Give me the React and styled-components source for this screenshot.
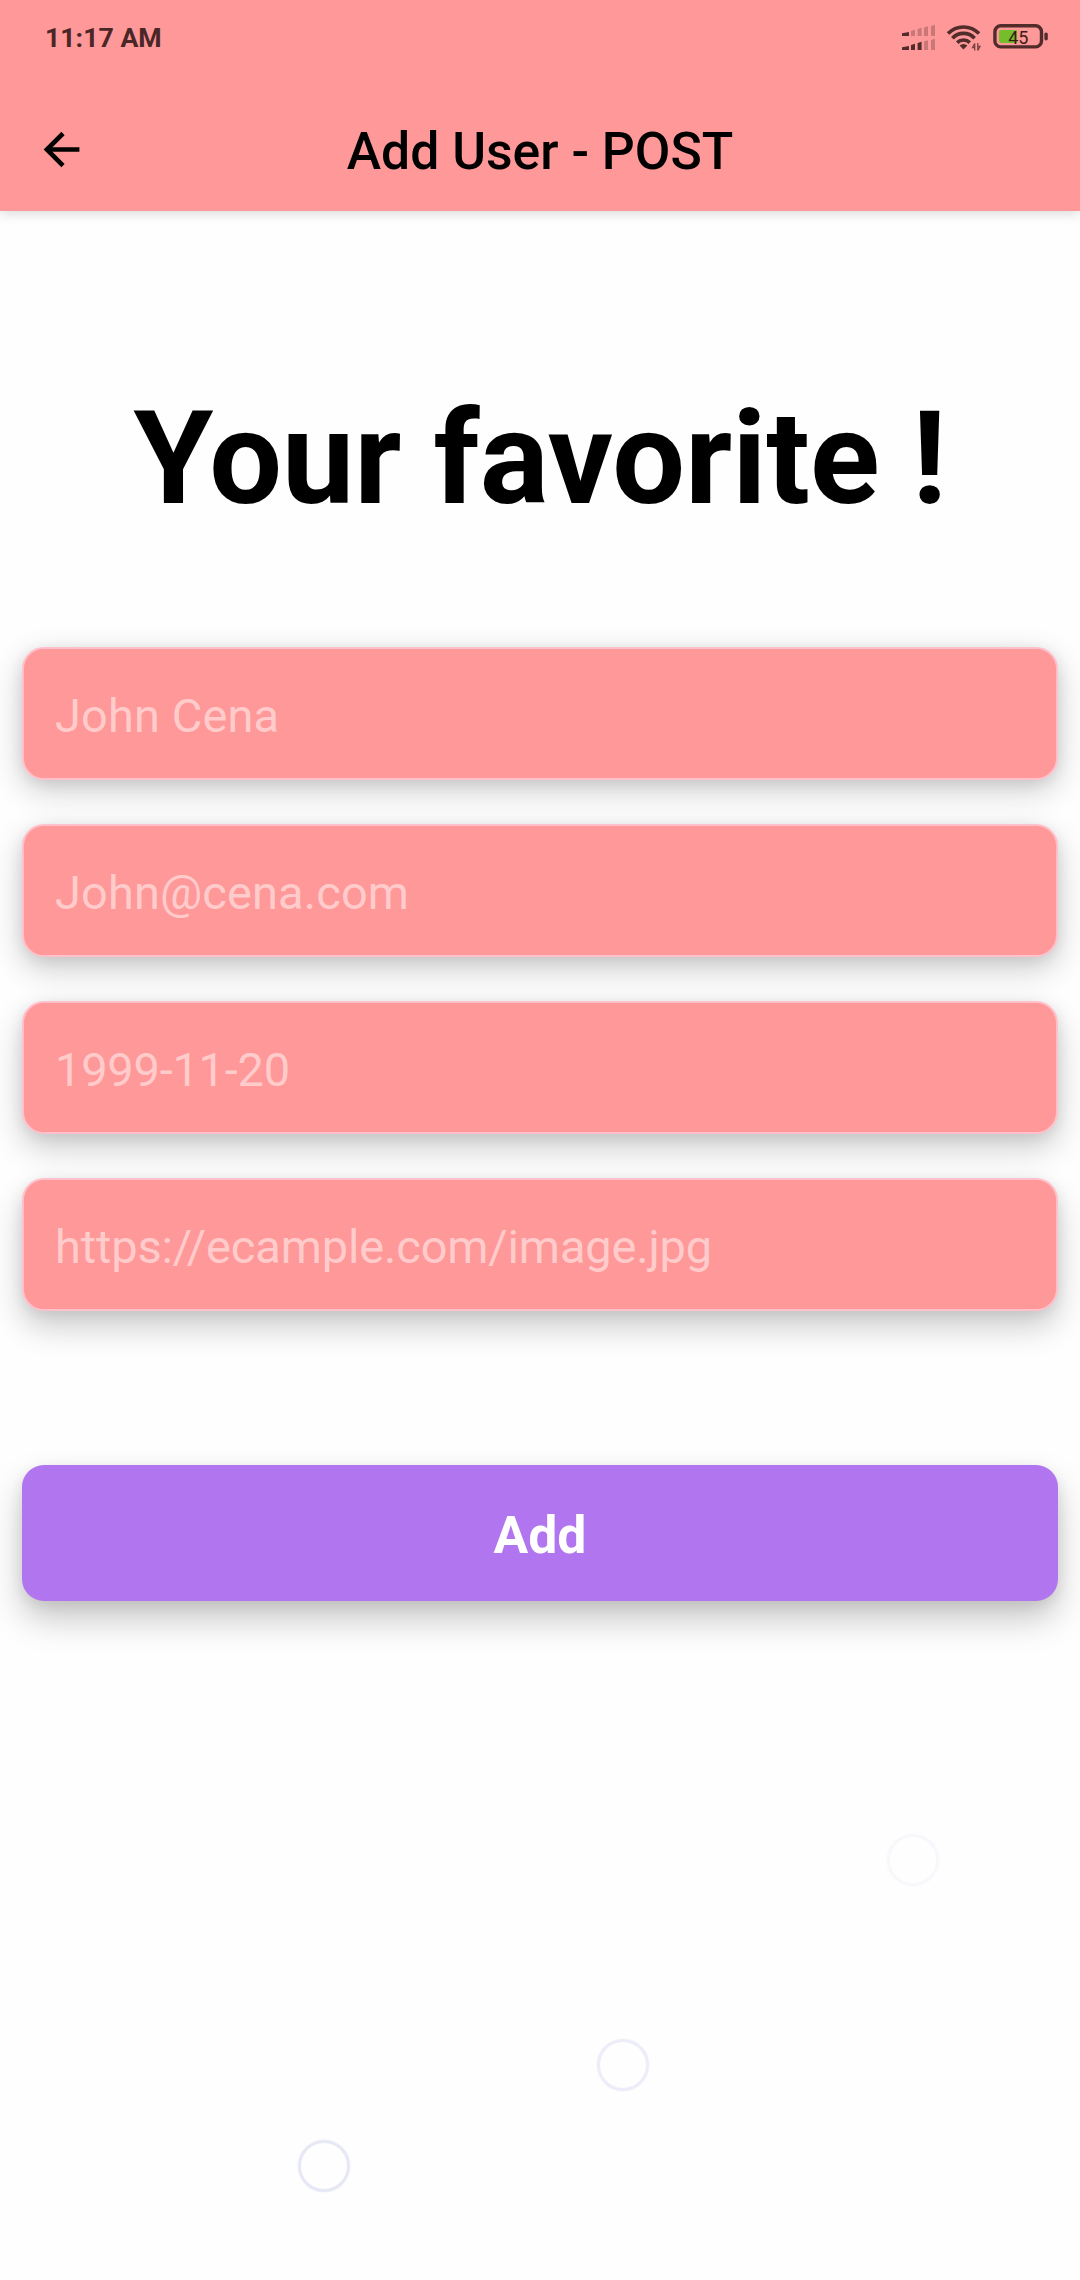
import React from "react";
import styled, { createGlobalStyle } from "styled-components";

const GlobalStyle = createGlobalStyle`
  body { margin: 0; background: #fefefe; }
  * { box-sizing: border-box; }
`;

const Screen = styled.div`
  position: relative;
  width: 1080px;
  height: 2280px;
  overflow: hidden;
  display: flex;
  flex-direction: column;
  background: #fefefe;
  font-family: Roboto, "Noto Sans", sans-serif;
  color: #000;
`;

const Top = styled.div`
  height: 211px;
  flex: none;
  background: #ff9898;
  box-shadow: 0 2px 12px rgba(0, 0, 0, 0.16);
`;

const StatusBar = styled.div`
  height: 75px;
  padding: 0 30px 0 45px;
  display: flex;
  align-items: center;
  justify-content: space-between;
`;

const Clock = styled.span`
  font-size: 26.7px;
  line-height: 32px;
  font-weight: 700;
  color: #4a2626;
`;

const StatusIcons = styled.svg`
  width: 150px;
  height: 75px;
  display: block;
`;

const BatteryText = styled.text`
  font-family: Roboto, sans-serif;
  font-size: 18px;
  fill: #3a1c14;
`;

const AppBar = styled.header`
  height: 136px;
  padding: 0 32px;
  display: grid;
  grid-template-columns: 60px 1fr 60px;
  align-items: center;
`;

const BackIcon = styled.svg`
  width: 60px;
  height: 60px;
  display: block;
`;

const Title = styled.h1`
  margin: 0;
  padding-top: 17px;
  text-align: center;
  font-size: 51.7px;
  line-height: 62px;
  font-weight: 500;
`;

const Form = styled.main`
  padding: 0 22px;
  display: flex;
  flex-direction: column;
`;

const Heading = styled.h2`
  margin: 173px 0 0;
  height: 150px;
  line-height: 150px;
  text-align: center;
  white-space: nowrap;
  font-size: 129px;
  font-weight: 700;
`;

const Fields = styled.div`
  margin-top: 113px;
  display: flex;
  flex-direction: column;
  gap: 44px;
`;

const Field = styled.div`
  height: 133px;
  padding: 4px 31px 0;
  display: flex;
  align-items: center;
  border: 2px solid #ffc0cb;
  border-radius: 22px;
  background: #ff9898;
  color: #ffcbcb;
  font-size: 47px;
  line-height: 56px;
  letter-spacing: ${(p) => p.$tracking}px;
  box-shadow: 0 ${(p) => p.$depth}px 32px rgba(0, 0, 0, 0.2),
    0 3px 14px rgba(0, 0, 0, 0.08);
`;

const AddButton = styled.button`
  margin: 154px 0 0;
  height: 136px;
  padding: 6px 0 0;
  border: 0;
  border-radius: 22px;
  background: #b175ef;
  color: #fff;
  font-family: inherit;
  font-size: 51.7px;
  line-height: 62px;
  font-weight: 700;
  box-shadow: 0 18px 34px rgba(0, 0, 0, 0.22), 0 4px 14px rgba(0, 0, 0, 0.08);
`;

const Ring = styled.span`
  position: absolute;
  left: ${(p) => p.$x - 26}px;
  top: ${(p) => p.$y - 26}px;
  width: 52px;
  height: 52px;
  border: 3px solid rgba(226, 228, 245, ${(p) => p.$alpha});
  border-radius: 50%;
  box-shadow: 0 0 2px rgba(226, 228, 245, ${(p) => p.$alpha * 0.7});
`;

const fields = [
  { text: "John Cena", depth: 10, tracking: 0.1 },
  { text: "John@cena.com", depth: 12, tracking: 0.1 },
  { text: "1999-11-20", depth: 14, tracking: -0.24 },
  { text: "https://ecample.com/image.jpg", depth: 16, tracking: -0.16 },
];

const rings = [
  { x: 913, y: 1860, alpha: 0.24 },
  { x: 623, y: 2065, alpha: 0.65 },
  { x: 324, y: 2166, alpha: 0.85 },
];

const bars = [
  { x: 2, w: 7, h: 4 },
  { x: 11, w: 4, h: 6.3 },
  { x: 17.6, w: 4, h: 8.3 },
  { x: 24, w: 4, h: 9.7 },
  { x: 31, w: 4, h: 11.3 },
];

function SignalRow({ y, active }) {
  return bars.map((b, i) => (
    <path
      key={b.x}
      d={`M${b.x} ${y} v${-b.h + 1.2} l${b.w} -1.2 V${y} z`}
      fill={i < active ? "#522b2b" : "#ca7777"}
    />
  ));
}

function Status() {
  return (
    <StatusIcons viewBox="0 0 150 75">
      <g>
        <SignalRow y={36} active={1} />
        <SignalRow y={50} active={3} />
      </g>
      <g fill="none" stroke="#522b2b" strokeWidth="3.6">
        <path d="M48 33.6 a21.5 21.5 0 0 1 31 0" />
        <path d="M52.4 38.2 a15.2 15.2 0 0 1 22.2 0" />
        <path d="M57.2 42.6 a9 9 0 0 1 12.6 0" />
      </g>
      <path d="M59.6 45.4 q3.9 -3 7.8 0 l-3.9 4.2 z" fill="#522b2b" />
      <g stroke="#7a4242" strokeWidth="1.3" fill="none">
        <path d="M74.7 50.5 v-7 l-2.2 4 h2.2" />
        <path d="M77.8 43 v7.5 l2.2 -4 h-2.2" />
      </g>
      <rect x="94.9" y="25.7" width="46.6" height="21.2" rx="6" fill="none" stroke="#522b2b" strokeWidth="3.4" />
      <path d="M101 30 h16 v13 h-16 a2 2 0 0 1 -2 -2 v-9 a2 2 0 0 1 2 -2 z" fill="#74bd2b" />
      <rect x="144.4" y="32.5" width="3.4" height="8" rx="1.7" fill="#522b2b" />
      <BatteryText x="108.2" y="44">45</BatteryText>
    </StatusIcons>
  );
}

export default function App() {
  return (
    <>
      <GlobalStyle />
      <Screen>
        <Top>
          <StatusBar>
            <Clock>11:17 AM</Clock>
            <Status />
          </StatusBar>
          <AppBar>
            <BackIcon viewBox="0 0 60 60" fill="none" stroke="#000" strokeWidth="4.6">
              <path d="M47.4 36.5 H15" />
              <path d="M31 20.5 L14.9 36.5 L31 52.6" />
            </BackIcon>
            <Title>Add User - POST</Title>
          </AppBar>
        </Top>
        <Form>
          <Heading>Your favorite !</Heading>
          <Fields>
            {fields.map((f) => (
              <Field key={f.text} $depth={f.depth} $tracking={f.tracking}>
                {f.text}
              </Field>
            ))}
          </Fields>
          <AddButton>Add</AddButton>
        </Form>
        {rings.map((r) => (
          <Ring key={r.x} $x={r.x} $y={r.y} $alpha={r.alpha} />
        ))}
      </Screen>
    </>
  );
}
